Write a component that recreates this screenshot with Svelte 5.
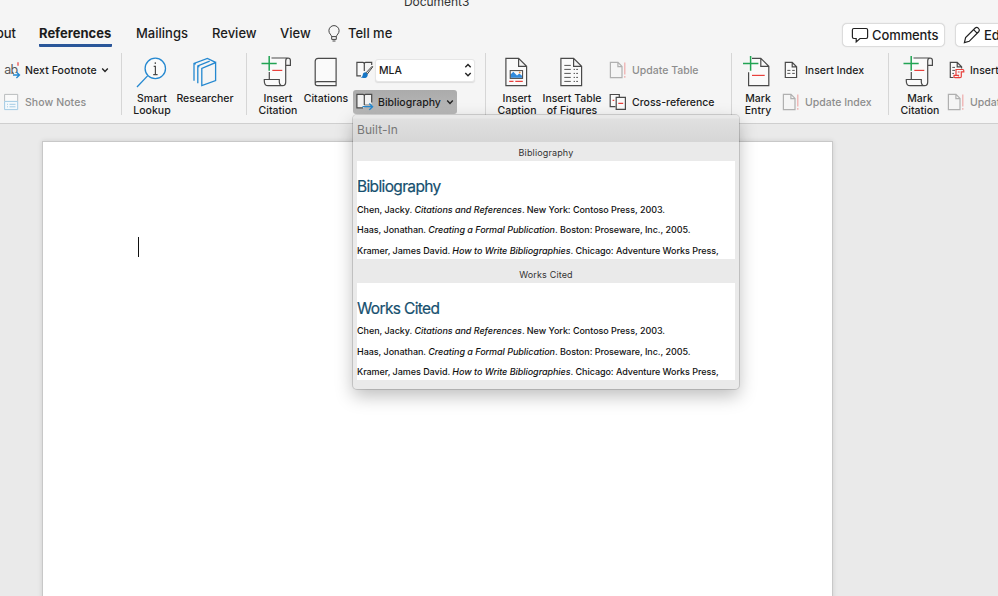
<script>
    const tabs = [
        { name: 'Layout', cls: 'layout' },
        { name: 'References', cls: 'active' },
        { name: 'Mailings', cls: 'mailings' },
        { name: 'Review', cls: 'review' },
        { name: 'View', cls: 'view' }
    ];

    const gallery = ['Bibliography', 'Works Cited'];

    const sources = [
        { author: 'Chen, Jacky.', title: 'Citations and References', rest: '. New York: Contoso Press, 2003.' },
        { author: 'Haas, Jonathan.', title: 'Creating a Formal Publication', rest: '. Boston: Proseware, Inc., 2005.' },
        { author: 'Kramer, James David.', title: 'How to Write Bibliographies', rest: '. Chicago: Adventure Works Press,' }
    ];
</script>

{#snippet scroll()}
    <svg class="big-icon" viewBox="0 0 34 34">
        <path class="paper" d="M9.5 3H27Q24.7 3.2 24.7 6V27Q24.7 30.7 21.5 30.7H7Q3.3 30.7 3.3 26V24.5H8.3V9z" stroke="none" />
        <path class="ink" d="M10.5 3H27Q29.4 3 29.4 5.5V10.3H24.7M27 3Q24.7 3.2 24.7 6V27Q24.7 30.7 21.5 30.7H7Q3.3 30.7 3.3 26V24.5H18.3V27Q18.5 30.7 21.5 30.7M8.3 17V24.5" />
        <path class="green" d="M.5 8.4H15.7M8.2 1V15.7" />
        <path class="red" d="M11.3 15.4H21.3" />
    </svg>
{/snippet}

{#snippet update()}
    <svg class="small-icon faded" viewBox="0 0 20 20">
        <path class="ink" d="M1.4 2.3H9L13 6.4V17.6H1.4zM8.9 2.3V6.6H13" />
        <path class="red" d="M15.8 2.5V14.5M15.8 16V17.8" />
    </svg>
{/snippet}

{#snippet chevron()}
    <svg class="chevron" viewBox="0 0 8 8"><path d="M1.2 2.6L4 5.4L6.8 2.6" /></svg>
{/snippet}

<div class="window">
    <div class="titlebar">Document3</div>

    <nav class="tabs">
        {#each tabs as tab}
            <span class="tab {tab.cls}">{tab.name}</span>
        {/each}
        <svg class="bulb" viewBox="0 0 14 18">
            <path d="M4.6 11.6C4.4 9.6 1.9 8.8 1.9 5.7A5.1 5.1 0 0 1 12.1 5.7C12.1 8.8 9.6 9.6 9.4 11.6zM4.7 11.6V14.4H9.3V11.6M5.5 16H8.5" />
        </svg>
        <span class="tab tell">Tell me</span>
        <div class="actions">
            <button class="action">
                <svg viewBox="0 0 18 18">
                    <path d="M2.8 2.5H15.2Q16.6 2.5 16.6 3.9V11.1Q16.6 12.5 15.2 12.5H9L5.2 16V12.5H2.8Q1.4 12.5 1.4 11.1V3.9Q1.4 2.5 2.8 2.5z" />
                </svg>
                <span>Comments</span>
            </button>
            <button class="action editing">
                <svg viewBox="0 0 18 18">
                    <path d="M1.4 16.6L2.6 11.6L12.2 2Q13.7.7 15.3 2.1Q17.1 3.8 15.9 5.5L6.2 15.3zM10.6 3.6L14.3 7.3" />
                </svg>
                <span>Editing</span>
            </button>
        </div>
    </nav>

    <div class="ribbon">
        <div class="group footnotes">
            <div class="rows">
                <div class="row">
                    <svg class="small-icon" viewBox="0 0 20 20">
                        <text x="1.2" y="14.2" class="ab">ab</text>
                        <path class="red" d="M15 2.3V5.8" />
                        <path class="knock" d="M11 15H20" />
                        <path class="blue" d="M10 15H16.4M13.4 12L16.5 15L13.4 18" />
                    </svg>
                    <span>Next Footnote</span>
                    {@render chevron()}
                </div>
                <div class="row disabled">
                    <svg class="small-icon" viewBox="0 0 20 20">
                        <path d="M1.6 9.4V2.4H14.7V9.4" fill="#fafafa" stroke="#b9bcbe" />
                        <path d="M1.6 9.4H14.7V17.6H1.6z" fill="#f4f9fc" stroke="#a3cbe4" />
                        <path d="M4 12.3H5M6.5 12.3H12.5M4 14.8H5M6.5 14.8H12.5" stroke="#a3cbe4" />
                    </svg>
                    <span>Show Notes</span>
                </div>
            </div>
        </div>

        <div class="group research">
            <div class="big smart">
                <svg class="big-icon" viewBox="0 0 34 34">
                    <path class="blue" d="M12.8 20.6L2 32" />
                    <circle class="blue" cx="20.3" cy="13.4" r="10.2" fill="#fafafa" />
                    <path class="ink" d="M18.7 11.3H20.4V19.6M18.2 19.6H22.6M20.3 7.3V9" />
                </svg>
                <span>Smart<br />Lookup</span>
            </div>
            <div class="big researcher">
                <svg class="big-icon" viewBox="0 0 34 34">
                    <path class="blue" d="M6 25.7V8.4L19.4 3.4L27.6 7.4M6 8.4L7.7 9.3M9.8 28.2V11L21.7 6.2M9.8 11L11.4 11.8M13.8 30.5V13.4L27.6 7.6V25.5z" />
                </svg>
                <span>Researcher</span>
            </div>
        </div>

        <div class="group citations">
            <div class="big insert-citation">
                {@render scroll()}
                <span>Insert<br />Citation</span>
            </div>
            <div class="big book">
                <svg class="big-icon" viewBox="0 0 34 34">
                    <path class="ink paper" d="M27.1 26.7V3.3H9.2Q6.2 3.3 6.2 6.3V28.6Q6.2 30.7 8.4 30.7H27.1V26.7H8.2Q6.2 26.7 6.2 28.6" />
                </svg>
                <span>Citations</span>
            </div>
            <div class="rows style-rows">
                <div class="row">
                    <svg class="small-icon" viewBox="0 0 20 20">
                        <path class="ink paper" d="M6 15.8H1.9V2.4H8Q9.3 2.4 9.3 4V11" />
                        <path class="ink" d="M9.3 4Q9.3 2.4 10.6 2.4H16.7V5" />
                        <path d="M17.2 6.2L11 12.8L12.3 14L17.8 6.8z" fill="#eee" stroke="#444" />
                        <path d="M10.7 12.3Q7.8 12.3 7.8 15Q7.4 17 5.6 17.6Q12.7 19.2 12.8 14.4z" fill="#1676c5" />
                    </svg>
                    <div class="select">
                        <span>MLA</span>
                        <svg class="stepper" viewBox="0 0 8 16"><path d="M1.3 5.2L4 2.5L6.7 5.2M1.3 11L4 13.7L6.7 11" /></svg>
                    </div>
                </div>
                <div class="row pressed">
                    <svg class="small-icon" viewBox="0 0 20 20">
                        <path d="M1.9 2.4H16.7V12H9.3V15.8H1.9z" fill="#f2f2f2" />
                        <path class="ink" d="M8 15.8H1.9V2.4H8Q9.3 2.4 9.3 4V13M9.3 4Q9.3 2.4 10.6 2.4H16.7V10.5" />
                        <path class="blue" d="M7.5 14.7H17.4M14.3 11.5L17.6 14.7L14.3 17.9" />
                    </svg>
                    <span>Bibliography</span>
                    {@render chevron()}
                </div>
            </div>
        </div>

        <div class="group captions">
            <div class="big caption">
                <svg class="big-icon" viewBox="0 0 34 34">
                    <path class="ink paper" d="M5.9 3.3H18.6L26.6 11.3V30.7H5.9zM18.6 3.3V11.3H26.6" />
                    <path d="M10.5 22.8V19.5L13.3 16.8L17 20.5L19.3 18.4L22.3 21V22.8z" fill="#2f8add" />
                    <rect x="10.2" y="15.6" width="12.4" height="7.8" fill="none" stroke="#444" />
                    <circle cx="19.7" cy="17.4" r=".9" fill="#f08a3c" />
                    <path class="red" d="M9.2 26.4H13.5M15.3 26.4H22.8" />
                </svg>
                <span>Insert<br />Caption</span>
            </div>
            <div class="big figures">
                <svg class="big-icon" viewBox="0 0 34 34">
                    <path class="ink paper" d="M5.9 3.3H18.6L26.6 11.3V30.7H5.9zM18.6 3.3V11.3H26.6" />
                    <path d="M9.3 10.4H15.8M9.3 14.4H15.8M9.3 18.4H15.8M9.3 22.4H15.8M9.3 26.4H15.8M18.6 14.4H20M21.2 14.4H23M18.6 18.4H20M21.2 18.4H23M18.6 22.4H20M21.2 22.4H23M18.6 26.4H20M21.2 26.4H23" stroke="#555" />
                </svg>
                <span>Insert Table<br />of Figures</span>
            </div>
            <div class="rows">
                <div class="row disabled">
                    {@render update()}
                    <span>Update Table</span>
                </div>
                <div class="row">
                    <svg class="small-icon" viewBox="0 0 20 20">
                        <path class="ink paper" d="M6.5 14.7H1.2V2.5H10.3V5" />
                        <path class="ink paper" d="M7.2 5.4H16.4V17.4H7.2z" />
                        <path class="red" d="M3.6 8.4H5.3M9.3 11.4H14.2" />
                    </svg>
                    <span>Cross-reference</span>
                </div>
            </div>
        </div>

        <div class="group index">
            <div class="big entry">
                <svg class="big-icon" viewBox="0 0 34 34">
                    <path class="paper" d="M7.6 3.3H19.8L27.8 11.3V30.7H7.6z" stroke="none" />
                    <path class="ink" d="M11 3.3H19.8L27.8 11.3V30.7H7.6V17.3M19.8 3.3V11.3H27.8" />
                    <path class="green" d="M2 8.4H17.4M9.6 1V15.7" />
                    <path class="red" d="M11 20.4H23.7" />
                </svg>
                <span>Mark<br />Entry</span>
            </div>
            <div class="rows">
                <div class="row">
                    <svg class="small-icon" viewBox="0 0 20 20">
                        <path class="ink paper" d="M3.3 2.4H10.2L14.6 6.8V17.5H3.3zM10.2 2.4V6.8H14.6" />
                        <path d="M5.3 10.4H8.4M10.2 10.4H12.8M5.3 13.4H8.4M10.2 13.4H12.8" stroke="#555" />
                    </svg>
                    <span>Insert Index</span>
                </div>
                <div class="row disabled">
                    {@render update()}
                    <span>Update Index</span>
                </div>
            </div>
        </div>

        <div class="group authorities">
            <div class="big mark-citation">
                {@render scroll()}
                <span>Mark<br />Citation</span>
            </div>
            <div class="rows">
                <div class="row">
                    <svg class="small-icon" viewBox="0 0 20 20">
                        <path class="ink paper" d="M6.5 17.5H3.3V2.4H10.2L14.6 6.8V8.4M10.2 2.4V6.8H14.6" />
                        <path d="M5.3 7.4H8M5.3 10.4H8M5.3 13.4H7" stroke="#555" />
                        <path class="red" d="M9 14.7V9.5H15.8Q16.8 9.5 16.8 10.7V11.8H14.3V16.5Q14.3 17.6 13 17.6H8Q7 17.6 7 16.4V15.3H11.5V16.5M10.8 12H12.6" />
                    </svg>
                    <span>Insert Table of Authorities</span>
                </div>
                <div class="row disabled">
                    {@render update()}
                    <span>Update Table</span>
                </div>
            </div>
        </div>
    </div>

    <main class="canvas">
        <div class="page"><div class="caret"></div></div>
    </main>

    <div class="popup">
        <div class="popup-header">Built-In</div>
        {#each gallery as heading}
            <section class="entry-block">
                <div class="entry-name">{heading}</div>
                <div class="preview">
                    <h2>{heading}</h2>
                    {#each sources as source}
                        <p>{source.author} <em>{source.title}</em>{source.rest}</p>
                    {/each}
                </div>
            </section>
        {/each}
    </div>
</div>

<style>
    :global(body) {
        overflow: hidden;
    }
    .window {
        position: relative;
        display: flex;
        flex-direction: column;
        width: 998px;
        height: 596px;
        overflow: hidden;
        background: #f5f5f5;
        color: #1c1c1c;
        font-family: Inter, "Liberation Sans", sans-serif;
        white-space: nowrap;
    }
    svg {
        display: block;
        flex: none;
        fill: none;
        overflow: visible;
    }
    .titlebar {
        flex: none;
        height: 20px;
        margin-left: 404px;
        margin-top: -6px;
        font-size: 12px;
        line-height: 16px;
        letter-spacing: -0.05px;
        color: #333;
    }

    /* tabs */
    .tabs {
        display: flex;
        flex: none;
        height: 39px;
        padding-top: 3px;
        box-sizing: border-box;
        font-size: 13px;
        font-weight: 500;
    }
    .tab {
        flex: none;
        height: 30px;
        line-height: 33px;
        box-sizing: border-box;
    }
    .layout {
        display: flex;
        justify-content: flex-end;
        width: 16px;
        margin-right: 23px;
    }
    .active {
        width: 73px;
        margin-right: 24px;
        font-weight: 700;
        border-bottom: 3px solid #2a5699;
        border-radius: 0 0 1px 1px;
    }
    .mailings {
        width: 76px;
    }
    .review {
        width: 68px;
    }
    .view {
        width: 47px;
    }
    .bulb {
        width: 14px;
        height: 18px;
        margin-top: 8px;
        stroke: #444;
    }
    .tell {
        margin-left: 7px;
        width: 45px;
    }
    .actions {
        display: flex;
        gap: 10px;
        margin-left: 449px;
        margin-top: 6px;
    }
    .action {
        display: flex;
        flex: none;
        align-items: center;
        gap: 3px;
        width: 103px;
        height: 24px;
        padding: 0 0 0 8px;
        box-sizing: border-box;
        border: 1px solid #dcdcdc;
        border-radius: 5px;
        background: #fff;
        box-shadow: 0 0 1px #ccc;
        color: #1c1c1c;
        font: 500 13px Inter, "Liberation Sans", sans-serif;
        letter-spacing: -0.1px;
    }
    .editing {
        padding-left: 7px;
    }
    .action svg {
        width: 18px;
        height: 18px;
        stroke: #222;
        stroke-width: 1.2;
    }

    /* ribbon */
    .ribbon {
        display: flex;
        height: 70px;
        flex: none;
        border-bottom: 1px solid #cfcfcf;
        font-size: 10.5px;
        font-weight: 500;
    }
    .group {
        display: flex;
        flex: none;
        height: 62px;
        box-sizing: border-box;
        border-right: 1px solid #d6d6d6;
    }
    .footnotes {
        width: 122px;
        padding-left: 3px;
    }
    .research {
        width: 125px;
    }
    .citations {
        width: 239px;
    }
    .captions {
        width: 246px;
    }
    .index {
        width: 157px;
    }
    .authorities {
        border-right: none;
    }
    .big {
        display: flex;
        flex: none;
        flex-direction: column;
        align-items: center;
        padding-top: 2px;
        text-align: center;
        line-height: 12px;
    }
    .big-icon {
        width: 34px;
        height: 34px;
        margin-bottom: 4px;
    }
    .smart {
        width: 60px;
    }
    .researcher {
        width: 46px;
    }
    .insert-citation {
        width: 62px;
    }
    .book {
        width: 34px;
    }
    .caption {
        width: 62px;
    }
    .figures {
        width: 48px;
    }
    .entry {
        width: 52px;
    }
    .mark-citation {
        width: 62px;
    }
    .rows {
        display: flex;
        flex-direction: column;
        gap: 8px;
        padding-top: 5px;
    }
    .style-rows {
        padding-left: 12px;
    }
    .captions .rows {
        padding-left: 13px;
    }
    .index .rows {
        margin-left: -2px;
    }
    .authorities .rows {
        margin-left: -4px;
    }
    .row {
        display: flex;
        align-items: center;
        height: 24px;
        gap: 3px;
    }
    .rows .small-icon {
        width: 20px;
        height: 20px;
    }
    .footnotes .row {
        gap: 2px;
        letter-spacing: 0.08px;
    }
    .disabled {
        color: #8d8d8d;
    }
    .faded {
        opacity: 0.4;
    }
    .chevron {
        width: 8px;
        height: 8px;
        margin-left: 2px;
        stroke: #222;
        stroke-width: 1.4;
    }
    .select {
        display: flex;
        align-items: center;
        justify-content: space-between;
        width: 100px;
        height: 23px;
        padding: 0 2px 0 3px;
        margin-left: -3px;
        box-sizing: border-box;
        border: 1px solid #e6e6e6;
        border-radius: 3px;
        background: #fff;
        box-shadow: 0 1px 1px #ddd;
    }
    .stepper {
        width: 8px;
        height: 16px;
        stroke: #222;
        stroke-width: 1.4;
    }
    .pressed {
        width: 104px;
        margin-left: -2px;
        padding-left: 2px;
        box-sizing: border-box;
        border-radius: 3px;
        background: linear-gradient(#ababab, #b9b9b9);
    }
    .ink {
        stroke: #4a4a4a;
        stroke-width: 1.2;
    }
    .paper {
        fill: #fafafa;
    }
    .green {
        stroke: #21a453;
        stroke-width: 1.5;
    }
    .red {
        stroke: #e8403c;
        stroke-width: 1.2;
    }
    .blue {
        stroke: #2488d0;
        stroke-width: 1.3;
    }
    .knock {
        stroke: #f5f5f5;
        stroke-width: 4;
    }
    .ab {
        font-size: 12.5px;
        font-weight: 400;
        fill: #555;
        letter-spacing: -0.8px;
    }

    /* document */
    .canvas {
        flex: 1;
        min-height: 0;
        padding: 17px 0 0 42px;
        background: #eaeaea;
    }
    .page {
        width: 791px;
        height: 480px;
        padding: 95px 0 0 95px;
        box-sizing: border-box;
        border: 1px solid #c8c8c8;
        background: #fff;
        box-shadow: 0 0 5px rgba(0, 0, 0, 0.12);
    }
    .caret {
        width: 1px;
        height: 20px;
        background: #111;
    }

    /* gallery dropdown */
    .popup {
        position: absolute;
        left: 353px;
        top: 115px;
        width: 386px;
        height: 274px;
        overflow: hidden;
        border-radius: 4px;
        background: #eaeaea;
        box-shadow: 0 0 0 1px rgba(0, 0, 0, 0.14), 0 7px 18px rgba(0, 0, 0, 0.26);
    }
    .popup-header {
        height: 27px;
        padding-left: 4px;
        box-sizing: border-box;
        background: linear-gradient(#e8e8e8 3px, #e0e0e0 4px, #d6d6d6);
        color: #777;
        font-size: 12px;
        letter-spacing: 0.05px;
        line-height: 30px;
    }
    .entry-block {
        padding: 0 4px;
    }
    .entry-name {
        height: 19px;
        font-size: 9px;
        letter-spacing: 0.15px;
        line-height: 22px;
        text-align: center;
        color: #333;
    }
    .entry-block + .entry-block .entry-name {
        height: 24px;
        line-height: 32px;
    }
    .preview {
        height: 97.5px;
        overflow: hidden;
        background: #fff;
        color: #111;
    }
    h2 {
        margin: 0;
        padding-top: 15px;
        height: 38.5px;
        box-sizing: border-box;
        color: #154f6e;
        font-size: 15.5px;
        font-weight: 400;
        letter-spacing: -0.65px;
        line-height: 22px;
        -webkit-text-stroke: 0.2px #154f6e;
    }
    p {
        margin: 0;
        font-size: 9px;
        font-weight: 500;
        letter-spacing: -0.045px;
        line-height: 20.7px;
    }
</style>
